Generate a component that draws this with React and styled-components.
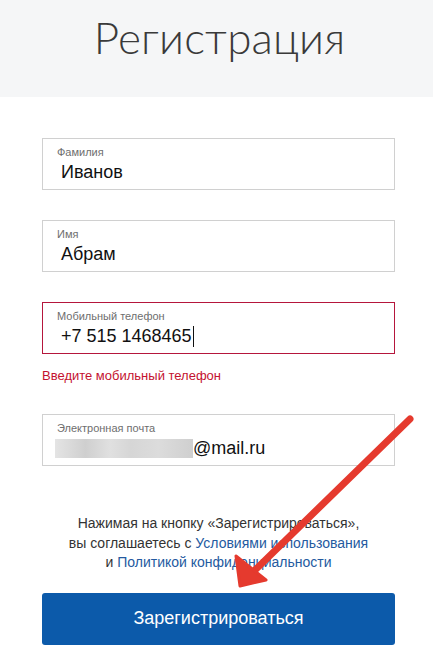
import React from 'react';
import styled, { createGlobalStyle } from 'styled-components';

const Global = createGlobalStyle`
    html, body {
        margin: 0;
        padding: 0;
        background: #fff;
        font-family: "Liberation Sans", Arial, sans-serif;
    }
`;

function Field({ label, value, error, children }) {
    return (
        <FieldBox error={error}>
            <Label>{label}</Label>
            <Value>{children || value}</Value>
        </FieldBox>
    );
}

function Arrow() {
    return (
        <ArrowLayer width="433" height="665" viewBox="0 0 433 665">
            <line x1="410" y1="419" x2="252" y2="573" stroke="#e53a2e" strokeWidth="7" strokeLinecap="round" />
            <polygon points="240,586 236,556 266,580" fill="#e53a2e" stroke="#e53a2e" strokeWidth="3" strokeLinejoin="round" />
        </ArrowLayer>
    );
}

export default function App() {
    return (
        <Page>
            <Global />
            <Header>
                <Title>Регистрация</Title>
            </Header>
            <Form>
                <Field label="Фамилия" value="Иванов" />
                <Field label="Имя" value="Абрам" />
                <Field label="Мобильный телефон" error>
                    +7 515 1468465<Caret />
                </Field>
                <ErrorText>Введите мобильный телефон</ErrorText>
                <Field label="Электронная почта">
                    <Blur />@mail.ru
                </Field>
                <Consent>
                    Нажимая на кнопку «Зарегистрироваться»,<br />
                    вы соглашаетесь с <Link>Условиями использования</Link><br />
                    и <Link>Политикой конфиденциальности</Link>
                </Consent>
                <Button>Зарегистрироваться</Button>
            </Form>
            <Arrow />
        </Page>
    );
}

const Page = styled.div`
    position: relative;
    width: 433px;
    height: 665px;
    overflow: hidden;
    background: #fff;
`;

const Header = styled.div`
    height: 97px;
    background: #f5f6f7;
    display: flex;
    justify-content: center;
    padding-top: 9px;
    box-sizing: border-box;
`;

const Title = styled.h1`
    margin: 0 0 0 6px;
    font-family: "Lato Light", "Lato", sans-serif;
    font-weight: 300;
    font-size: 44px;
    letter-spacing: 0.2px;
    color: #3a3a3a;
    line-height: 56px;
`;

const Form = styled.div`
    width: 353px;
    margin: 41px 0 0 42px;
    display: flex;
    flex-direction: column;
`;

const FieldBox = styled.div`
    height: 52px;
    box-sizing: border-box;
    border: 1px solid ${p => (p.error ? '#b5163c' : '#d0d0d0')};
    padding: 6px 0 0 14px;
    margin-bottom: ${p => (p.error ? '0' : '30px')};
`;

const Label = styled.div`
    font-size: 11px;
    line-height: 14px;
    color: #6e6e6e;
`;

const Value = styled.div`
    display: flex;
    align-items: center;
    font-size: 18px;
    line-height: 24px;
    color: #111;
    padding-left: 4px;
    margin-top: 1px;
`;

const Caret = styled.span`
    display: inline-block;
    width: 1px;
    height: 21px;
    background: #111;
    margin-left: 1px;
`;

const Blur = styled.span`
    display: inline-block;
    width: 138px;
    height: 19px;
    margin-left: -6px;
    background: linear-gradient(90deg, #e4e4e4 0%, #d9d9d9 12%, #cfcfcf 22%, #e0e0e0 40%, #d6d6d6 55%, #dcdcdc 75%, #cfcfcf 100%);
`;

const ErrorText = styled.div`
    font-size: 13px;
    color: #c4122f;
    line-height: 16px;
    margin: 14px 0 30px;
`;

const Consent = styled.p`
    margin: 18px -20px 0;
    font-size: 14px;
    line-height: 19.5px;
    color: #333;
    text-align: center;
`;

const Link = styled.span`
    color: #245aa0;
`;

const Button = styled.button`
    margin-top: 20px;
    height: 52px;
    border: none;
    border-radius: 3px;
    background: #0c5aaa;
    color: #fff;
    font-family: "Liberation Sans", Arial, sans-serif;
    font-size: 18px;
`;

const ArrowLayer = styled.svg`
    position: absolute;
    left: 0;
    top: 0;
    pointer-events: none;
`;
